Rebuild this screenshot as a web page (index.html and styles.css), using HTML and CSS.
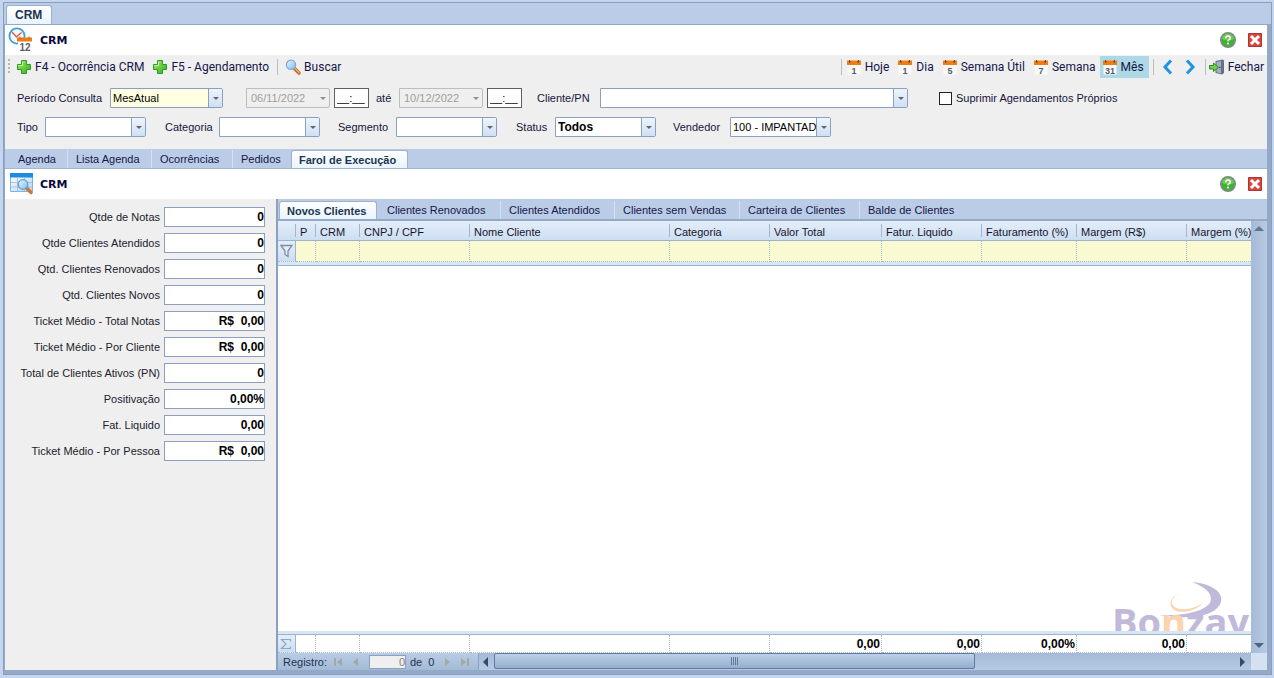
FILE: index.html
```html
<!DOCTYPE html>
<html lang="pt-BR">
<head>
<meta charset="utf-8">
<title>CRM</title>
<link rel="stylesheet" href="styles.css">
</head>
<body>
<svg class="defs" width="0" height="0" aria-hidden="true">
  <defs>
    <linearGradient id="green" x1="0" y1="0" x2="1" y2="1"><stop offset="0" stop-color="#a5ec62"/><stop offset="1" stop-color="#2fae1c"/></linearGradient>
    <linearGradient id="lens" x1="0" y1="0" x2="1" y2="1"><stop offset="0" stop-color="#eaf7ff"/><stop offset="1" stop-color="#79bdea"/></linearGradient>
    <linearGradient id="sheet" x1="0" y1="0" x2="1" y2="1"><stop offset="0" stop-color="#ffffff"/><stop offset="1" stop-color="#b5d6f5"/></linearGradient>
    <symbol id="plus" viewBox="0 0 16 16"><path d="M5.500 1.500h5v4h4v5h-4v4h-5v-4h-4v-5h4z" fill="url(#green)" stroke="#2c9a28"/><path d="M6.500 6.500v-4M2.500 6.500h4" stroke="#d3f7ad" fill="none"/></symbol>
    <symbol id="search" viewBox="0 0 16 16"><path d="M9.500 9.500l4.500 4.500" stroke="#b8692c" stroke-width="3.400" stroke-linecap="round"/><path d="M10 9.500l4 4" stroke="#f3a45c" stroke-width="1.600" stroke-linecap="round"/><circle cx="6" cy="5.800" r="4.600" fill="url(#lens)" stroke="#86a9cb" stroke-width="1.300"/></symbol>
    <symbol id="cal" viewBox="0 0 16 16"><path d="M1.500 6h13v9.500h-13z" fill="#fafafa"/><path d="M1 1.500h14v4.500H1z" fill="#f07d10"/><path d="M3.500 1v2.500l1.500-1M12.500 1v2.500l-1.500-1" stroke="#6d4a2c" fill="none"/></symbol>
    <symbol id="help" viewBox="0 0 16 16"><circle cx="8" cy="8" r="7.300" fill="#46ad35" stroke="#7c8a86" stroke-width="1.400"/><path d="M2 7a6 5.500 0 0 1 12 0q-6 3-12 0z" fill="#82cf6c" opacity=".7"/><path d="M5.800 6.200q0-2.200 2.200-2.200t2.200 1.900q0 1.200-1.200 1.800-1 .5-1 1.500" fill="none" stroke="#fff" stroke-width="1.500"/><circle cx="8" cy="11.600" r="1" fill="#fff"/></symbol>
    <symbol id="close" viewBox="0 0 14 14"><path d="M.5.5h13v13H.5z" fill="#d2493f" stroke="#b5332c"/><path d="M3 3l8 8M11 3l-8 8" stroke="#fff" stroke-width="3"/></symbol>
  </defs>
</svg>
<div class="window">
  <nav class="strip strip-top"><button class="tab tab-app active">CRM</button></nav>
  <main class="page">
    <header class="titlebar">
      <svg class="title-icon" viewBox="0 0 26 26">
        <circle cx="9" cy="9" r="7.600" fill="#f5fbff" stroke="#3e9fdf" stroke-width="1.800"/>
        <path d="M4 5l4.500 5 5-4.500" fill="none" stroke="#e0483e" stroke-width="1.200"/>
        <path d="M10 14h14v11H10z" fill="#fff"/><path d="M9 10.500h15v4H9z" fill="#ee7c13"/>
        <path d="M12 9.500v2M21 9.500v2" stroke="#8a5a34"/>
        <text x="17" y="24" text-anchor="middle" class="icon-number">12</text>
      </svg>
      <h1>CRM</h1>
      <button class="icon-button" aria-label="Ajuda"><svg width="16" height="16"><use href="#help"/></svg></button>
      <button class="icon-button" aria-label="Fechar"><svg width="14" height="14"><use href="#close"/></svg></button>
    </header>
    <div class="toolbar">
      <span class="grip"></span>
      <button class="tool"><svg width="16" height="16"><use href="#plus"/></svg>F4 - Ocorrência CRM</button>
      <button class="tool"><svg width="16" height="16"><use href="#plus"/></svg>F5 - Agendamento</button>
      <span class="divider"></span>
      <button class="tool"><svg width="16" height="16"><use href="#search"/></svg>Buscar</button>
      <span class="divider push"></span>
      <button class="tool"><svg width="16" height="16"><use href="#cal"/><text x="8" y="15" text-anchor="middle" class="day">1</text></svg>Hoje</button>
      <button class="tool"><svg width="16" height="16"><use href="#cal"/><text x="8" y="15" text-anchor="middle" class="day">1</text></svg>Dia</button>
      <button class="tool"><svg width="16" height="16"><use href="#cal"/><text x="8" y="15" text-anchor="middle" class="day">5</text></svg>Semana Útil</button>
      <button class="tool"><svg width="16" height="16"><use href="#cal"/><text x="8" y="15" text-anchor="middle" class="day">7</text></svg>Semana</button>
      <button class="tool pressed"><svg width="16" height="16"><use href="#cal"/><text x="8" y="15" text-anchor="middle" class="day">31</text></svg>Mês</button>
      <span class="divider"></span>
      <button class="tool arrow" aria-label="Anterior"><svg width="16" height="16" viewBox="0 0 16 16"><path d="M11 1.500L5 8l6 6.500" fill="none" stroke="#1e95e0" stroke-width="3"/></svg></button>
      <button class="tool arrow" aria-label="Próximo"><svg width="16" height="16" viewBox="0 0 16 16"><path d="M5 1.500L11 8l-6 6.500" fill="none" stroke="#1e95e0" stroke-width="3"/></svg></button>
      <span class="divider"></span>
      <button class="tool"><svg width="16" height="16" viewBox="0 0 16 16"><path d="M6.500 2l7-1.500 1.500 1V14l-2 1.500-6.500-1.500z" fill="#667086"/><path d="M7.500 3l4.500-1v12.500l-4.500-1.200z" fill="#a4abc4"/><circle cx="10.800" cy="8.500" r=".8" fill="#3e4560"/><path d="M.5 6.500h4V4l5 4.300-5 4.200V10h-4z" fill="#6fd04c" stroke="#2b8c27"/></svg>Fechar</button>
    </div>
    <form class="filters">
      <div class="filter-row dates">
        <label for="periodo">Período Consulta</label>
        <span class="combo w-period yellow"><select id="periodo"><option>MesAtual</option></select></span>
        <span class="combo w-date off"><select aria-label="Data inicial" disabled><option>06/11/2022</option></select></span>
        <input class="time" aria-label="Hora inicial" value="__:__">
        <label class="ate" for="fim">até</label>
        <span class="combo w-date off"><select id="fim" disabled><option>10/12/2022</option></select></span>
        <input class="time" aria-label="Hora final" value="__:__">
        <label class="cliente" for="cliente">Cliente/PN</label>
        <span class="combo w-client"><select id="cliente"><option></option></select></span>
        <label class="check"><input type="checkbox">Suprimir Agendamentos Próprios</label>
      </div>
      <div class="filter-row">
        <label class="l-tipo" for="tipo">Tipo</label>
        <span class="combo"><select id="tipo"><option></option></select></span>
        <label class="l-cat" for="categoria">Categoria</label>
        <span class="combo"><select id="categoria"><option></option></select></span>
        <label class="l-seg" for="segmento">Segmento</label>
        <span class="combo"><select id="segmento"><option></option></select></span>
        <label class="l-sta" for="status">Status</label>
        <span class="combo strong"><select id="status"><option>Todos</option></select></span>
        <label class="l-ven" for="vendedor">Vendedor</label>
        <span class="combo"><select id="vendedor"><option>100 - IMPANTADO</option></select></span>
      </div>
    </form>
    <nav class="strip strip-main">
      <button class="tab t-agenda">Agenda</button><button class="tab t-lista">Lista Agenda</button><button class="tab t-ocor">Ocorrências</button><button class="tab t-ped">Pedidos</button><button class="tab t-farol active">Farol de Execução</button>
    </nav>
    <header class="titlebar sub">
      <svg class="title-icon" viewBox="0 0 26 26">
        <path d="M2.500 3.500h22v17h-22z" fill="url(#sheet)" stroke="#82b3e0"/><path d="M2 2h23v4.500H2z" fill="#1d8de2"/>
        <path d="M3 11.500h21M3 16h21M9.500 7v13M16.500 7v13" stroke="#a9c4df"/>
        <path d="M19 17.500l4 4" stroke="#cf7638" stroke-width="3.600" stroke-linecap="round"/>
        <circle cx="15" cy="13.500" r="4.800" fill="url(#lens)" stroke="#6c9cc8" stroke-width="1.300"/>
      </svg>
      <h2>CRM</h2>
      <button class="icon-button" aria-label="Ajuda"><svg width="16" height="16"><use href="#help"/></svg></button>
      <button class="icon-button" aria-label="Fechar"><svg width="14" height="14"><use href="#close"/></svg></button>
    </header>
    <div class="content">
      <aside class="totals">
        <label for="k1">Qtde de Notas</label><input id="k1" value="0">
        <label for="k2">Qtde Clientes Atendidos</label><input id="k2" value="0">
        <label for="k3">Qtd. Clientes Renovados</label><input id="k3" value="0">
        <label for="k4">Qtd. Clientes Novos</label><input id="k4" value="0">
        <label for="k5">Ticket Médio - Total Notas</label><input id="k5" value="R$  0,00">
        <label for="k6">Ticket Médio - Por Cliente</label><input id="k6" value="R$  0,00">
        <label for="k7">Total de Clientes Ativos (PN)</label><input id="k7" value="0">
        <label for="k8">Positivação</label><input id="k8" value="0,00%">
        <label for="k9">Fat. Liquido</label><input id="k9" value="0,00">
        <label for="k10">Ticket Médio - Por Pessoa</label><input id="k10" value="R$  0,00">
      </aside>
      <section class="report">
        <nav class="strip strip-grid">
          <button class="tab g1 active">Novos Clientes</button><button class="tab g2">Clientes Renovados</button><button class="tab g3">Clientes Atendidos</button><button class="tab g4">Clientes sem Vendas</button><button class="tab g5">Carteira de Clientes</button><button class="tab g6">Balde de Clientes</button>
        </nav>
        <div class="grid-area">
          <div class="grid-body">
            <table>
              <colgroup><col class="c-mark"><col class="c-p"><col class="c-crm"><col class="c-cnpj"><col class="c-nome"><col class="c-cat"><col class="c-valor"><col class="c-cat"><col class="c-fat"><col class="c-cnpj"><col></colgroup>
              <thead>
                <tr class="heads"><th></th><th>P</th><th>CRM</th><th>CNPJ / CPF</th><th>Nome Cliente</th><th>Categoria</th><th>Valor Total</th><th>Fatur. Liquido</th><th>Faturamento (%)</th><th>Margem (R$)</th><th>Margem (%)</th></tr>
                <tr class="filter"><td class="mark"><svg width="14" height="14" viewBox="0 0 14 14"><path d="M1 1.500h11L8 7v5.500l-3-2V7z" fill="#e6edf5" stroke="#7d8ea3" stroke-width="1.300"/></svg></td><td></td><td></td><td></td><td></td><td></td><td></td><td></td><td></td><td></td><td></td></tr>
                <tr class="band"><td colspan="11"></td></tr>
              </thead>
              <tbody>
                <tr><td colspan="11" class="blank">
                  <svg width="138" height="50" viewBox="0 0 138 50" role="img" aria-label="Bonzay">
                    <path d="M79 1C104 3 117 17 102 29C90 38 64 37 46 34C70 35 90 31 97 22C101 13 92 6 79 1z" fill="#c0b9d9"/>
                    <path d="M67 13C56 17 56 26 67 28C75 29 84 26 90 22C82 31 65 34 59 27C55 21 59 15 67 13z" fill="#fbd3ae"/>
                    <text x="-1" y="55" class="brand">Bo<tspan class="brand-n">n</tspan>zay</text>
                  </svg>
                </td></tr>
              </tbody>
              <tfoot>
                <tr class="band"><td colspan="11"></td></tr>
                <tr class="sums"><td class="mark"><svg width="12" height="12" viewBox="0 0 12 12"><path d="M10.500 3.500v-2h-9L6 6l-4.500 4.500h9v-2" fill="none" stroke="#93a7be" stroke-width="1.200"/></svg></td><td></td><td></td><td></td><td></td><td></td><td>0,00</td><td>0,00</td><td>0,00%</td><td>0,00</td><td></td></tr>
              </tfoot>
            </table>
            <div class="vscroll"><span class="tri up"></span><span class="tri down"></span></div>
          </div>
          <footer class="nav-bar">
            <div class="record">
              <label for="reg">Registro:</label>
              <button aria-label="Primeiro"><svg width="10" height="8"><path d="M1 0h2v8H1zM9 0v8L4 4z"/></svg></button>
              <button aria-label="Registro anterior"><svg width="10" height="8"><path d="M7 0v8L2 4z"/></svg></button>
              <input id="reg" value="0">
              <span>de&nbsp; 0</span>
              <button aria-label="Próximo registro"><svg width="10" height="8"><path d="M3 0v8l5-4z"/></svg></button>
              <button aria-label="Último"><svg width="10" height="8"><path d="M7 0h2v8H7zM1 0v8l5-4z"/></svg></button>
            </div>
            <div class="hscroll"><span class="tri left"></span><div class="track"><div class="thumb"><i></i></div></div><span class="tri right"></span></div>
            <div class="corner"></div>
          </footer>
        </div>
      </section>
    </div>
  </main>
</div>
</body>
</html>
```
FILE: styles.css
```css
* { box-sizing: border-box; }
html, body { height: 100%; margin: 0; }
body { background: #c3d6ee; font: 11px "Liberation Sans", Arial, sans-serif; color: #15153c; padding: 2px 2px 3px 3px; }
button, input, select { font: inherit; color: inherit; margin: 0; padding: 0; border: 0; border-radius: 0; background: none; }
h1, h2 { margin: 0; }
.defs { position: absolute; }

.window { height: 100%; display: flex; flex-direction: column; background: #bbcde6; border: 1px solid #8a9fc0; }
.page { flex: 1; min-height: 0; display: flex; flex-direction: column; background: #fff; border: solid #94a9c8; border-width: 1px 4px 4px 1px; }

.strip { display: flex; align-items: stretch; background: #bbcde6; flex: none; }
.tab { text-align: left; padding: 0 0 0 10px; white-space: nowrap; color: #15154a; border-right: 1px solid #d5e1f1; }
.tab.active { background: linear-gradient(#fff, #e8f4ff); border: 1px solid #9db1ce; border-bottom: 0; border-radius: 3px 3px 0 0; font-weight: bold; color: #20344f; padding-left: 7px; }
.strip-top { height: 21px; padding: 2px 0 0 2px; }
.strip-top .tab-app { width: 46px; font-size: 12px; padding-left: 8px; }
.strip-main { height: 20px; padding-top: 1px; border-bottom: 1px solid #a5b6d0; }
.t-agenda { width: 63px; padding-left: 13px; }
.t-lista { width: 84px; padding-left: 8px; }
.t-ocor { width: 81px; padding-left: 8px; }
.t-ped { width: 58px; border-right: 0; padding-left: 8px; }
.t-farol { width: 117px; }

.titlebar { height: 30px; flex: none; display: flex; align-items: center; background: #fff; padding: 0 5px 0 3px; }
.title-icon { width: 26px; height: 26px; }
.titlebar h1, .titlebar h2 { font: bold 11px "DejaVu Sans", Verdana, sans-serif; color: #08083c; margin: 0 auto 0 6px; }
.icon-number { font: bold 10px "Liberation Sans", sans-serif; fill: #5b6068; }
.icon-button { display: flex; margin-left: 12px; }

.toolbar { height: 24px; flex: none; display: flex; align-items: center; background: #efefef; font: 12px Roboto, "Segoe UI", sans-serif; padding: 0 1px 0 3px; }
.tool { display: flex; align-items: center; gap: 3px; height: 22px; padding: 0 4px; white-space: nowrap; color: #15154a; }
.tool svg { flex: none; }
.tool.pressed { background: #add8e6; padding: 0 5px 0 2px; }
.arrow { padding: 0 3px; }
.day { font: bold 9px "Liberation Sans", sans-serif; fill: #555c66; }
.divider { width: 1px; height: 16px; background: #bcbcbc; margin: 0 3px 0 4px; }
.divider.push { margin: 0 0 0 auto; }
.divider + .tool:last-child { padding: 0 2px 0 0; }
.grip { width: 2px; height: 16px; margin-right: 2px; background: repeating-linear-gradient(#b5b5b5 0 2px, transparent 2px 4px); }

.filters { background: #efefef; padding: 9px 12px 12px; display: flex; flex-direction: column; gap: 9px; flex: none; }
.filter-row { display: flex; align-items: center; height: 20px; }
.filter-row label { flex: none; white-space: nowrap; }
.dates > label:first-child { width: 93px; }
.combo { position: relative; width: 101px; height: 20px; flex: none; background: #fff; border: 1px solid #8ba0c1; border-radius: 0 2px 2px 0; }
.combo select { display: block; width: 100%; height: 100%; padding: 0 14px 0 2px; appearance: none; color: #000; }
.combo::after { content: ""; position: absolute; right: 0; top: 0; bottom: 0; width: 13px; border-left: 1px solid #8ba0c1; background: linear-gradient(#eef4fb, #cfe0f4); pointer-events: none; }
.combo::before { content: ""; position: absolute; z-index: 1; right: 3px; top: 8px; border: 3px solid transparent; border-top-color: #60656e; border-bottom: 0; pointer-events: none; }
.combo.strong { font-weight: bold; font-size: 12px; }
.combo.yellow { background: #ffffe1; }
.combo.off { background: #efefef; border-color: #b9bdc4; margin-left: 4px; }
.combo.off::after { display: none; }
.combo.off::before { border-top-color: #8e8e8e; }
.combo.off select { color: #a09e9a; opacity: 1; padding-left: 4px; }
.combo.w-period { width: 113px; margin-right: 19px; }
.combo.w-date { width: 84px; }
.combo.w-client { width: 308px; }
.time { width: 35px; height: 20px; margin-left: 4px; background: #fff; border: 1px solid #606060; padding-left: 2px; color: #000; }
.ate { width: 26px; padding-left: 7px; }
.cliente { width: 78px; padding-left: 15px; }
.check { display: flex; align-items: center; gap: 4px; margin-left: 31px; }
.check input { appearance: none; width: 13px; height: 13px; border: 1px solid #222; background: #fff; }
.check input:checked { background: #15154a; }
.l-tipo { width: 28px; }
.l-cat { width: 73px; padding-left: 19px; }
.l-seg { width: 76px; padding-left: 18px; }
.l-sta { width: 58px; padding-left: 19px; }
.l-ven { width: 74px; padding-left: 17px; }

.content { flex: 1; min-height: 0; display: flex; background: #efefef; }
.totals { width: 271px; flex: none; display: grid; grid-template-columns: 159px 101px; grid-auto-rows: 20px; align-content: start; gap: 6px 0; padding-top: 8px; align-items: center; color: #1c1c2c; }
.totals label { text-align: right; padding-right: 4px; white-space: nowrap; }
.totals input { width: 100%; height: 20px; background: #fff; border: 1px solid #8ba0c1; text-align: right; font-weight: bold; font-size: 12px; color: #000; }

.report { flex: 1; min-width: 0; display: flex; flex-direction: column; border-left: 2px solid #8ba0c1; background: #bbcde6; }
.strip-grid { height: 22px; padding: 2px 0 0 1px; border-bottom: 2px solid #94a9c8; }
.g1 { width: 98px; }
.g2 { width: 124px; }
.g3 { width: 114px; }
.g4 { width: 125px; }
.g5 { width: 120px; }
.g6 { border: 0; }
.g3, .g4, .g5, .g6 { padding-left: 8px; }
.grid-area { flex: 1; min-height: 0; display: flex; flex-direction: column; }
.grid-body { flex: 1; min-height: 0; display: grid; grid-template-columns: minmax(0, 1fr) 16px; }
table { width: 100%; height: 100%; table-layout: fixed; border-collapse: separate; border-spacing: 0; background: #fff; }
th, td { padding: 0; overflow: hidden; white-space: nowrap; }
.c-mark { width: 18px; } .c-p { width: 20px; } .c-crm { width: 44px; } .c-cnpj { width: 110px; } .c-nome { width: 200px; }
.c-cat { width: 100px; } .c-valor { width: 112px; } .c-fat { width: 95px; }
.heads th { height: 20px; font-weight: normal; text-align: left; padding: 2px 0 0 4px; color: #15152a; border-bottom: 1px solid #9db3d0; background: linear-gradient(#a3b6d0, #a3b6d0) right 3px / 1px 13px no-repeat, linear-gradient(#e4eefa, #cddef2); }
.heads th:last-child { background: linear-gradient(#e4eefa, #cddef2); }
.filter td { height: 21px; background: #f9f9d2; border-right: 1px dotted #a9b9cd; border-bottom: 1px dotted #a9b9cd; }
.filter td:last-child, .sums td:last-child { border-right: 0; }
.filter .mark, .sums .mark { background: linear-gradient(#e4eefa, #cddef2); border-right: 1px solid #9db3d0; }
.mark svg { display: block; margin: auto; }
.band td { height: 4px; background: #d8e5f4; border-bottom: 1px solid #9db3d0; }
.blank { vertical-align: bottom; }
.blank svg { display: block; margin-left: auto; }
.brand { font: 700 38px "Open Sans", sans-serif; fill: #c0b9d9; }
.brand-n { fill: #fbd3ae; }
.sums td { height: 18px; padding-right: 1px; border-right: 1px dotted #a9b9cd; border-bottom: 1px dotted #a9b9cd; text-align: right; font-weight: bold; font-size: 12px; color: #000; }
.vscroll { background: linear-gradient(90deg, #a5bad6, #b6cae4); display: flex; flex-direction: column; justify-content: space-between; align-items: center; padding: 5px 0; }
.tri { flex: none; border: 5px solid transparent; }
.up { border-bottom-color: #5e7593; border-top: 0; }
.down { border-top-color: #4e6482; border-bottom: 0; }
.left { border-right-color: #354a68; border-left: 0; margin: 0 6px 0 4px; }
.right { border-left-color: #354a68; border-right: 0; margin: 0 6px; }

.nav-bar { height: 17px; flex: none; display: flex; color: #1e3350; background: #aec3de; }
.record { width: 201px; display: flex; align-items: center; padding-left: 5px; border-right: 1px solid #8ba0c1; background: linear-gradient(#b9cce5, #a3bad6); }
.record label { width: 50px; }
.record button { width: 10px; display: flex; margin-right: 8px; fill: #a5a99f; }
.record input { width: 37px; height: 14px; background: #efefef; border: 1px solid #8ba0c1; text-align: right; color: #8a7f78; margin-right: 4px; }
.record span { width: 32px; }
.hscroll { flex: 1; display: flex; align-items: center; background: linear-gradient(#a5bad6, #b6cae4); }
.track { flex: 1; height: 100%; }
.thumb { width: 65%; height: 16px; border: 1px solid #5f7ba1; border-radius: 2px; background: linear-gradient(#bdd0e8, #94aecd); display: flex; align-items: center; justify-content: center; }
.thumb i { width: 8px; height: 8px; background: repeating-linear-gradient(90deg, #5f7ba1 0 1px, transparent 1px 2px); }
.corner { width: 16px; background: #d3e1f2; }
```
